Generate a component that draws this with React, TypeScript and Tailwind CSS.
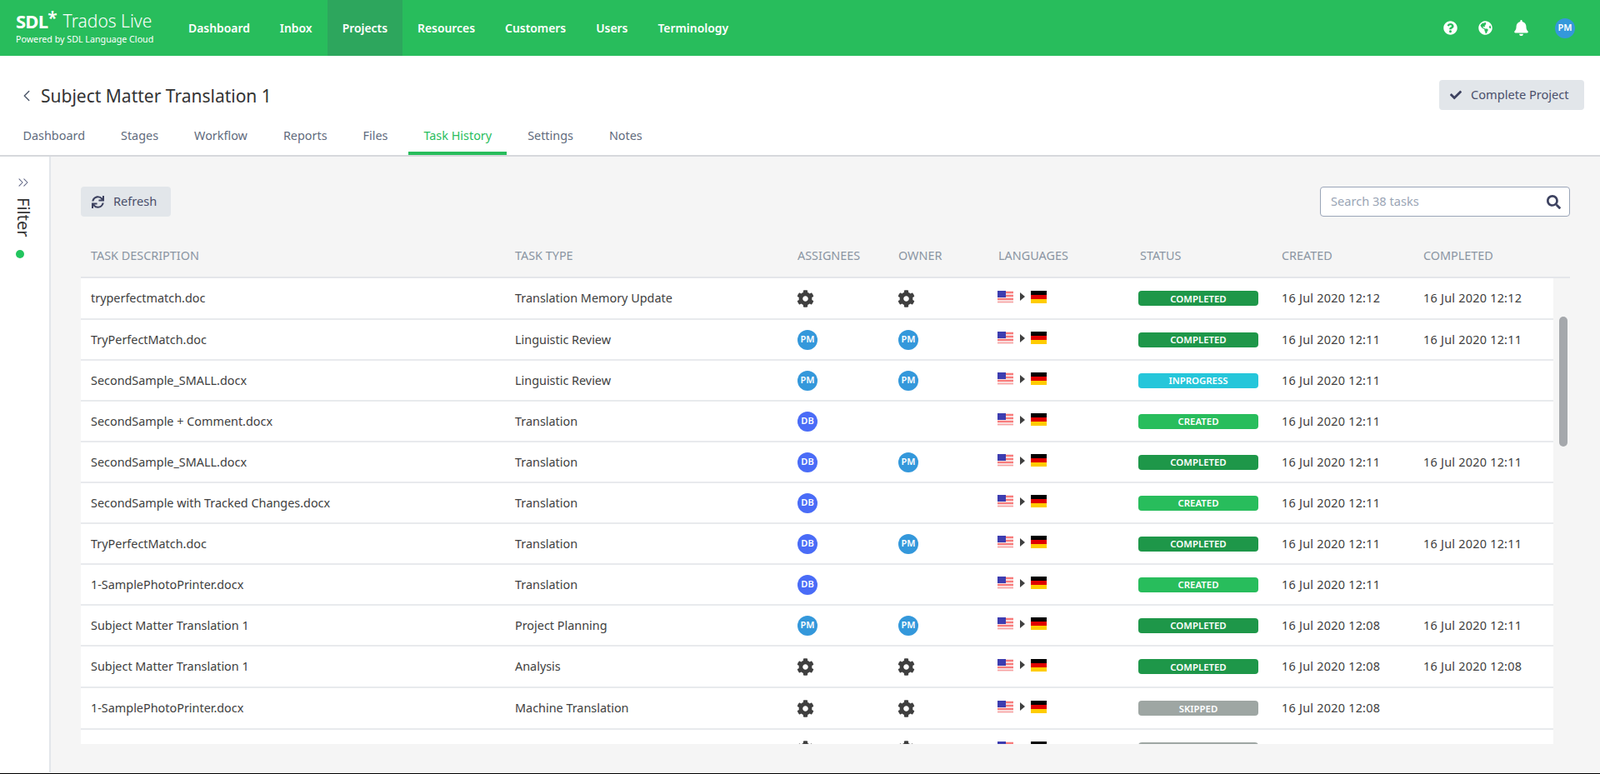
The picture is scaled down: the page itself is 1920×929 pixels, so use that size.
import { ChevronLeft, ChevronsRight } from 'lucide-react'
import { FaBell, FaCheck, FaCog, FaGlobeAmericas, FaQuestionCircle, FaSearch, FaSync } from 'react-icons/fa'

type Status = 'COMPLETED' | 'INPROGRESS' | 'CREATED' | 'SKIPPED'
type Person = 'PM' | 'DB' | 'gear' | ''

const NAV = ['Dashboard', 'Inbox', 'Projects', 'Resources', 'Customers', 'Users', 'Terminology']
const TABS = ['Dashboard', 'Stages', 'Workflow', 'Reports', 'Files', 'Task History', 'Settings', 'Notes']
const COLUMNS = ['TASK DESCRIPTION', 'TASK TYPE', 'ASSIGNEES', 'OWNER', 'LANGUAGES', 'STATUS', 'CREATED', 'COMPLETED']

const ROWS: Array<{
  name: string
  type: string
  assignee: Person
  owner: Person
  status: Status
  created: string
  completed: string
}> = [
  { name: 'tryperfectmatch.doc', type: 'Translation Memory Update', assignee: 'gear', owner: 'gear', status: 'COMPLETED', created: '16 Jul 2020 12:12', completed: '16 Jul 2020 12:12' },
  { name: 'TryPerfectMatch.doc', type: 'Linguistic Review', assignee: 'PM', owner: 'PM', status: 'COMPLETED', created: '16 Jul 2020 12:11', completed: '16 Jul 2020 12:11' },
  { name: 'SecondSample_SMALL.docx', type: 'Linguistic Review', assignee: 'PM', owner: 'PM', status: 'INPROGRESS', created: '16 Jul 2020 12:11', completed: '' },
  { name: 'SecondSample + Comment.docx', type: 'Translation', assignee: 'DB', owner: '', status: 'CREATED', created: '16 Jul 2020 12:11', completed: '' },
  { name: 'SecondSample_SMALL.docx', type: 'Translation', assignee: 'DB', owner: 'PM', status: 'COMPLETED', created: '16 Jul 2020 12:11', completed: '16 Jul 2020 12:11' },
  { name: 'SecondSample with Tracked Changes.docx', type: 'Translation', assignee: 'DB', owner: '', status: 'CREATED', created: '16 Jul 2020 12:11', completed: '' },
  { name: 'TryPerfectMatch.doc', type: 'Translation', assignee: 'DB', owner: 'PM', status: 'COMPLETED', created: '16 Jul 2020 12:11', completed: '16 Jul 2020 12:11' },
  { name: '1-SamplePhotoPrinter.docx', type: 'Translation', assignee: 'DB', owner: '', status: 'CREATED', created: '16 Jul 2020 12:11', completed: '' },
  { name: 'Subject Matter Translation 1', type: 'Project Planning', assignee: 'PM', owner: 'PM', status: 'COMPLETED', created: '16 Jul 2020 12:08', completed: '16 Jul 2020 12:11' },
  { name: 'Subject Matter Translation 1', type: 'Analysis', assignee: 'gear', owner: 'gear', status: 'COMPLETED', created: '16 Jul 2020 12:08', completed: '16 Jul 2020 12:08' },
  { name: '1-SamplePhotoPrinter.docx', type: 'Machine Translation', assignee: 'gear', owner: 'gear', status: 'SKIPPED', created: '16 Jul 2020 12:08', completed: '' },
  { name: '', type: '', assignee: 'gear', owner: 'gear', status: 'SKIPPED', created: '', completed: '' },
]

const STATUS_COLORS: Record<Status, string> = {
  COMPLETED: 'bg-[#1e9749]',
  INPROGRESS: 'bg-[#26c6da]',
  CREATED: 'bg-[#28bd5c]',
  SKIPPED: 'bg-[#9ea6a3]',
}

const GRID = 'grid grid-cols-[509px_339px_121px_120px_168px_172px_170px_1fr] items-center pl-3'

function PersonCell({ person }: { person: Person }) {
  if (person === 'gear') return <FaCog className="-ml-px h-[21px] w-[21px] text-[#3f3f3f]" />
  if (!person) return <span />
  return (
    <span
      className={`flex h-6 w-6 items-center justify-center rounded-full text-[11px] font-semibold text-white ${
        person === 'PM' ? 'bg-[#3498db]' : 'bg-[#4a6cf7]'
      }`}
    >
      {person}
    </span>
  )
}

function Flags() {
  return (
    <div className="-ml-px -mt-[4px] flex items-center">
      <svg width="19" height="15" viewBox="0 0 19 15" className="block">
        <rect width="19" height="15" fill="#f9dcdc" />
        <rect x="0" y="1" width="19" height="2" fill="#f87c7c" />
        <rect x="0" y="5" width="19" height="2" fill="#f87c7c" />
        <rect x="0" y="9" width="19" height="2" fill="#f87c7c" />
        <rect x="0" y="13" width="19" height="1" fill="#f9a0a0" />
        <rect width="10" height="8" fill="#3d3db0" />
      </svg>
      <svg width="6" height="10" viewBox="0 0 6 10" className="ml-[8px] mr-[7px] block">
        <path d="M0 0 L6 5 L0 10 Z" fill="#404040" />
      </svg>
      <svg width="19" height="15" viewBox="0 0 19 15" className="block">
        <rect width="19" height="5" fill="#000" />
        <rect y="5" width="19" height="5" fill="#e00000" />
        <rect y="10" width="19" height="5" fill="#ffcc00" />
      </svg>
    </div>
  )
}

export default function App() {
  return (
    <div className="flex h-[929px] w-[1920px] flex-col overflow-hidden bg-[#f5f5f5] font-['Open_Sans',sans-serif] text-[14.4px]">
      <header className="flex h-[67px] shrink-0 items-stretch bg-[#28bd5c] text-white">
        <div className="flex w-[208px] shrink-0 flex-col pl-[19px] pt-[12px]">
          <div className="flex items-start leading-none">
            <span className="font-['Inter',sans-serif] text-[22px] font-bold leading-[26px] tracking-[-0.8px]">SDL</span>
            <span className="-mt-[1px] font-['Inter',sans-serif] text-[21px] font-semibold leading-[21px]">*</span>
            <span className="ml-[7px] font-['Lato',sans-serif] text-[21px] font-light leading-[26px]">Trados Live</span>
          </div>
          <span className="mt-[3px] font-['Lato',sans-serif] text-[10.7px] leading-[13px]">Powered by SDL Language Cloud</span>
        </div>
        <nav className="flex">
          {NAV.map((item) => (
            <a
              key={item}
              className={`flex items-center px-[18px] pt-px text-[13.9px] font-semibold ${item === 'Projects' ? 'bg-[#2da65d]' : ''}`}
            >
              {item}
            </a>
          ))}
        </nav>
        <div className="ml-auto flex items-center pr-[30px]">
          <FaQuestionCircle className="h-[17px] w-[17px]" />
          <FaGlobeAmericas className="ml-[25px] h-[17px] w-[17px]" />
          <FaBell className="ml-[25px] h-[19px] w-[19px]" />
          <span className="ml-[31px] flex h-6 w-6 items-center justify-center rounded-full bg-[#3498db] text-[11px] font-semibold">
            PM
          </span>
        </div>
      </header>

      <div className="h-[121px] shrink-0 border-b-2 border-[#d6d8dc] bg-white">
        <div className="flex h-[78px] items-start justify-between pl-[21px] pr-[19px] pt-[29px]">
          <div className="flex items-center pt-[5px]">
            <ChevronLeft className="h-[22px] w-[22px] text-[#4a5568]" strokeWidth={1.5} />
            <h1 className="ml-[6px] text-[21px] font-normal leading-[28px] text-[#333]">Subject Matter Translation 1</h1>
          </div>
          <button
            type="button"
            className="flex h-9 w-[174px] items-center rounded bg-[#e2e6ea] pl-[13px] text-[14.6px] text-[#4a4f6a]"
          >
            <FaCheck className="h-[14px] w-[14px] text-[#3d4260]" />
            <span className="ml-[11px]">Complete Project</span>
          </button>
        </div>
        <nav className="flex h-[41px] pl-[6px]">
          {TABS.map((tab) => (
            <a
              key={tab}
              className={`mx-[3.5px] flex items-center border-b-4 px-[18px] pb-[1px] text-[14.4px] ${
                tab === 'Task History' ? 'border-[#28bd5c] text-[#28bd5c]' : 'border-transparent text-[#5f6b7d]'
              }`}
            >
              {tab}
            </a>
          ))}
        </nav>
      </div>

      <div className="flex min-h-0 flex-1 pb-px">
        <aside className="flex w-[61px] shrink-0 flex-col items-center border-r-2 border-[#e2e6ea] bg-white pt-[21px]">
          <ChevronsRight className="mr-[3px] h-[20px] w-[20px] text-[#5a6080]" strokeWidth={1.25} />
          <span className="mr-[3px] mt-[8px] text-[20px] leading-[24px] text-[#333] [writing-mode:vertical-rl]">Filter</span>
          <span className="mr-[11px] mt-[16px] h-[10px] w-[10px] rounded-full bg-[#22c55e]" />
        </aside>

        <main className="relative flex min-w-0 flex-1 flex-col pl-[36px] pr-[56px] pt-[36px]">
          <div className="flex shrink-0 items-start justify-between">
            <button
              type="button"
              className="flex h-9 w-[108px] items-center rounded bg-[#e2e6ea] pl-[13px] text-[14.6px] text-[#4a4f6a]"
            >
              <FaSync className="h-[15px] w-[15px] text-[#3d4260]" />
              <span className="ml-[11px]">Refresh</span>
            </button>
            <div className="relative -mr-[20px] flex h-9 w-[300px] items-center rounded border border-[#9aa5b8] bg-white pl-[12px]">
              <span className="text-[14.6px] text-[#9aa5b5]">Search 38 tasks</span>
              <FaSearch className="absolute right-[10px] h-[17px] w-[17px] text-[#3d4260]" />
            </div>
          </div>

          <div className={`${GRID} -mr-[20px] mt-[14px] h-[60px] shrink-0 border-b-2 border-[#e4e6ea] pt-[7px] text-[14.4px] text-[#8b95a3]`}>
            {COLUMNS.map((col) => (
              <span key={col} className={col === 'STATUS' ? 'pl-[2px]' : ''}>
                {col}
              </span>
            ))}
          </div>

          <div className="h-[559px] min-h-0 overflow-hidden">
            {ROWS.map((row, i) => (
              <div
                key={i}
                className={`${GRID} ${i === 0 || i === 9 || i === 10 ? 'h-[50px]' : 'h-[49px]'} border-b-2 border-[#e8eaed] bg-white text-[14.4px] text-[#404040]`}
              >
                <span>{row.name}</span>
                <span>{row.type}</span>
                <PersonCell person={row.assignee} />
                <PersonCell person={row.owner} />
                <Flags />
                <span
                  className={`flex h-[18px] w-[144px] items-center justify-center rounded-sm pt-px text-[11.4px] font-semibold text-white ${STATUS_COLORS[row.status]}`}
                >
                  {row.name ? row.status : ''}
                </span>
                <span className="tracking-[0.25px]">{row.created}</span>
                <span className="tracking-[0.25px]">{row.completed}</span>
              </div>
            ))}
          </div>

          <div className="absolute right-[39px] top-[192px] h-[156px] w-[10px] rounded-full bg-[#a5a8ac]" />
        </main>
      </div>
      <div className="h-px shrink-0 bg-black" />
    </div>
  )
}
